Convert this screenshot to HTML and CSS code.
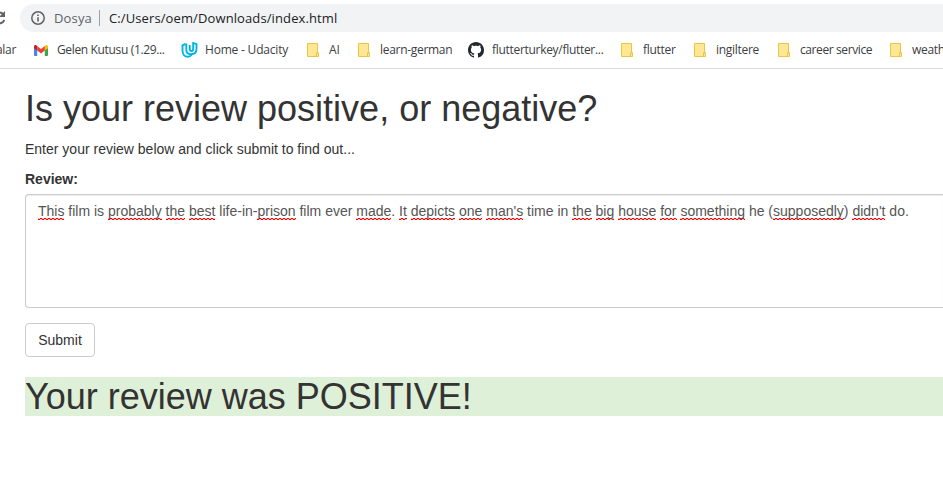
FILE: index.html
```html
<!DOCTYPE html>
<html lang="tr">
<head>
<meta charset="utf-8">
<title>Review</title>
<link rel="stylesheet" href="styles.css">
</head>
<body>
<svg width="0" height="0" class="defs" aria-hidden="true">
  <symbol id="folder" viewBox="0 0 12 14"><path d="M.5.5h10v9.3h1v3.7H.5z" fill="#ffe793" stroke="#e8c648"/><path d="M9.5 13.5V9.8h2" fill="none" stroke="#e8c648"/></symbol>
</svg>
<header class="toolbar">
  <svg class="reload" width="16" height="16" viewBox="0 0 16 16"><path d="M12 4A5.500 5.500 0 1 0 13.300 9.800" fill="none" stroke="#5f6368" stroke-width="2"/><path d="M14 1v6H8z" fill="#5f6368"/></svg>
  <div class="address">
    <svg class="info" width="14" height="14" viewBox="0 0 14 14"><circle cx="7" cy="7" r="6.2" fill="none" stroke="#5f6368" stroke-width="1.5"/><path d="M6.2 3.4h1.6V5H6.2zM6.2 6.2h1.6v4.4H6.2z" fill="#5f6368"/></svg>
    <span class="scheme">Dosya</span><span class="divider"></span><span class="url">C:/Users/oem/Downloads/index.html</span>
  </div>
</header>
<nav class="bookmarks">
  <span class="bm b0">alar</span>
  <span class="bm b1"><svg width="14" height="11" viewBox="0 0 14 11"><path d="M0 1.5V10q0 1 1 1h2.2V4z" fill="#4285f4"/><path d="M14 1.5V10q0 1-1 1h-2.2V4z" fill="#34a853"/><path d="M10.8 1v4.6L14 3.2V1.4C14 0 12.5-.4 11.5.4z" fill="#fbbc04"/><path d="M0 1.4v1.8l3.2 2.4V1L2.5.4C1.500-.4 0 0 0 1.400z" fill="#c5221f"/><path d="M3.200 1L7 3.900 10.800 1v4.600L7 8.500 3.200 5.600z" fill="#ea4335"/></svg><span>Gelen Kutusu (1.29...</span></span>
  <span class="bm b2"><svg width="17" height="16" viewBox="0 0 17 16"><path d="M4.500 1.800L1.500 3.300v5.200c0 4 2.300 6.300 5.300 6.300 1.700 0 3-.8 4-2.300" fill="none" stroke="#02b3e4" stroke-width="1.900"/><path d="M5.300 1.500V7.500c0 3 1.500 4.700 4.400 4.700 3.700 0 5.800-2.200 5.800-5.500V2.200L12.200 1v5.500c0 1.700-.7 2.600-1.800 2.600s-1.700-.8-1.700-2.100V3" fill="none" stroke="#02b3e4" stroke-width="1.900"/></svg><span>Home - Udacity</span></span>
  <span class="bm b3"><svg width="12" height="14"><use href="#folder"/></svg><span>AI</span></span>
  <span class="bm b4"><svg width="12" height="14"><use href="#folder"/></svg><span>learn-german</span></span>
  <span class="bm b5"><svg width="16" height="16" viewBox="0 0 16 16"><path fill="#24292e" d="M8 0C3.580 0 0 3.580 0 8c0 3.540 2.290 6.530 5.470 7.590.4.070.55-.17.55-.38 0-.19-.01-.82-.01-1.490-2.010.37-2.530-.49-2.690-.94-.09-.23-.48-.94-.82-1.130-.28-.15-.68-.52-.01-.53.63-.01 1.080.58 1.230.82.72 1.210 1.870.87 2.330.66.07-.52.28-.87.51-1.070-1.780-.2-3.640-.89-3.640-3.950 0-.87.31-1.590.82-2.150-.08-.2-.36-1.020.08-2.120 0 0 .67-.21 2.200.82.64-.18 1.320-.27 2-.27s1.360.09 2 .27c1.530-1.040 2.200-.82 2.200-.82.44 1.100.16 1.920.08 2.120.51.56.82 1.270.82 2.150 0 3.070-1.870 3.750-3.650 3.950.29.25.54.73.54 1.480 0 1.070-.01 1.930-.01 2.200 0 .21.15.46.55.38A8.010 8.010 0 0 0 16 8c0-4.420-3.580-8-8-8z"/></svg><span>flutterturkey/flutter...</span></span>
  <span class="bm b6"><svg width="12" height="14"><use href="#folder"/></svg><span>flutter</span></span>
  <span class="bm b7"><svg width="12" height="14"><use href="#folder"/></svg><span>ingiltere</span></span>
  <span class="bm b8"><svg width="12" height="14"><use href="#folder"/></svg><span>career service</span></span>
  <span class="bm b9"><svg width="12" height="14"><use href="#folder"/></svg><span>weather</span></span>
</nav>
<main class="page">
  <h1>Is your review positive, or negative?</h1>
  <p>Enter your review below and click submit to find out...</p>
  <div class="label">Review:</div>
  <div class="field"><u>This</u> film is <u>probably</u> <u>the</u> <u>best</u> life-in-<u>prison</u> film ever <u>made</u>. <u>It</u> <u>depicts</u> <u>one</u> <u>man's</u> time in <u>the</u> <u>big</u> <u>house</u> <u>for</u> <u>something</u> he (<u>supposedly</u>) <u>didn't</u> do.</div>
  <button class="submit" type="button">Submit</button>
  <h1 class="result">Your review was POSITIVE!</h1>
</main>
</body>
</html>
```
FILE: styles.css
```css
* { box-sizing: border-box; }
body { margin: 0; height: 481px; overflow: hidden; background: #fff; color: #333; font: 14px/20px "Liberation Sans", Arial, sans-serif; }
.defs { display: block; height: 0; }
.toolbar { display: flex; height: 36px; padding: 4px 0; }
.reload { flex: none; margin: 6px 13px 0 -9px; }
.address { flex: 1; display: flex; align-items: center; height: 28px; padding-left: 11px; border-radius: 14px 0 0 14px; background: #f1f3f4; font: 13px/20px "Open Sans", "Noto Sans", sans-serif; white-space: nowrap; }
.info { flex: none; }
.scheme { width: 37px; margin-left: 9px; color: #5f6368; letter-spacing: .15px; }
.divider { width: 1px; height: 16px; margin: 0 9px 0 8px; background: #9aa0a6; }
.url { color: #202124; letter-spacing: .11px; }
.bookmarks { display: flex; height: 33px; border-bottom: 1px solid #dadce0; color: #3c4043; font: 12px/16px "Open Sans", "Noto Sans", sans-serif; white-space: nowrap; overflow: hidden; }
.bm { flex: none; display: flex; align-items: center; height: 28px; letter-spacing: -.3px; }
.bm svg { flex: none; }
.b0 { width: 34px; text-indent: -4px; }
.b1 { width: 147px; gap: 9px; letter-spacing: -.35px; }
.b2 { width: 126px; gap: 7px; letter-spacing: -.2px; }
.b3 { width: 51px; gap: 10px; letter-spacing: 0; }
.b4 { width: 110px; gap: 10px; }
.b5 { width: 153px; gap: 8px; }
.b6 { width: 73px; gap: 10px; }
.b7 { width: 84px; gap: 10px; }
.b8 { width: 112px; gap: 10px; letter-spacing: -.4px; }
.b9 { gap: 10px; }
.page { padding-left: 25px; }
h1 { margin: 20px 0 10px; font-size: 36px; font-weight: normal; line-height: 1.1; white-space: nowrap; }
p { margin: 0 0 10px; }
.label { margin-bottom: 5px; font-weight: bold; }
.field { height: 114px; margin-bottom: 15px; padding: 6px 12px; border: 1px solid #ccc; border-right: 0; border-radius: 4px 0 0 4px; box-shadow: inset 0 1px 1px rgba(0,0,0,.075); color: #555; white-space: nowrap; }
u { padding-bottom: 1px; text-decoration: none; background: conic-gradient(#f00 25%, #ff000040 0 50%, #f00 0 75%, #ff000040 0) 0 100% / 4px 2px repeat-x; }
.submit { display: block; height: 34px; width: 70px; padding: 0; border: 1px solid #ccc; border-radius: 4px; background: #fff; color: #333; font: inherit; }
.result { margin-top: 20px; background: #dff0d8; }
```
